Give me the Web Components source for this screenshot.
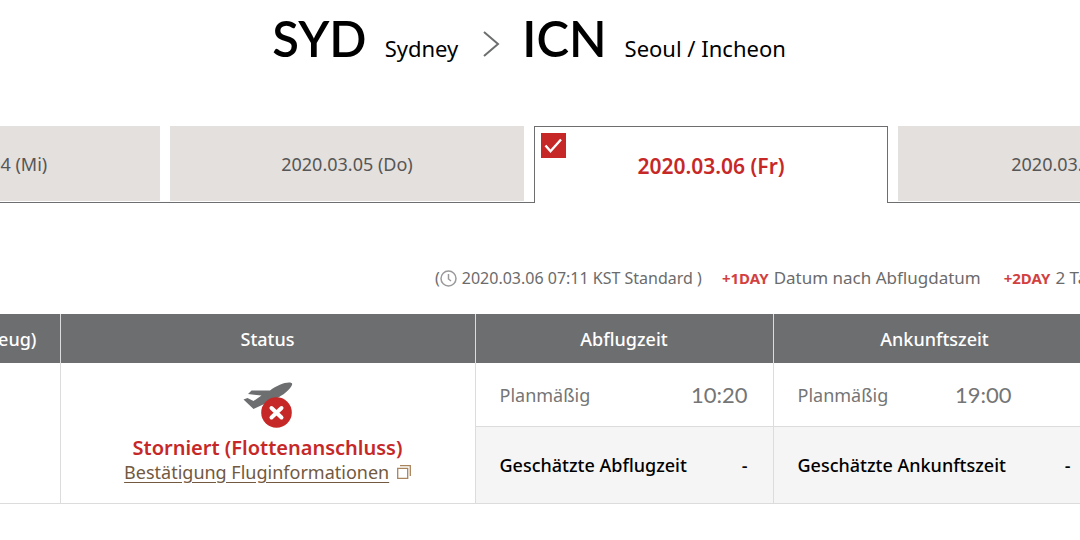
<!DOCTYPE html>
<html lang="de">
<head>
<meta charset="utf-8">
<title>Flugstatus</title>
<style>
  body {
    margin: 0;
    background: #fff;
    color: #000;
    font-family: "Noto Sans", sans-serif;
    overflow: hidden;
  }
</style>
</head>
<body>
<flight-page>
  <flight-route from="SYD" to="ICN">
    <span slot="from-city">Sydney</span>
    <span slot="to-city">Seoul / Incheon</span>
  </flight-route>
  <date-tabs>
    <date-tab>2020.03.04 (Mi)</date-tab>
    <date-tab>2020.03.05 (Do)</date-tab>
    <date-tab selected>2020.03.06 (Fr)</date-tab>
    <date-tab>2020.03.07 (Sa)</date-tab>
  </date-tabs>
  <time-legend time="2020.03.06 07:11 KST Standard"></time-legend>
  <flight-table></flight-table>
</flight-page>

<script>
class FlightPage extends HTMLElement {
  constructor() {
    super();
    this.attachShadow({ mode: 'open' }).innerHTML = `
      <style>
        :host {
          display: block;
          overflow: hidden;
        }
        /* Content is wider than the viewport on both sides */
        .wrap {
          width: calc(100% + 366px);
          margin-left: -194px;
          padding-bottom: 36px;
        }
      </style>
      <div class="wrap"><slot></slot></div>
    `;
  }
}

class FlightRoute extends HTMLElement {
  constructor() {
    super();
    this.attachShadow({ mode: 'open' });
  }

  connectedCallback() {
    this.shadowRoot.innerHTML = `
      <style>
        :host { display: block; }
        h1 {
          display: flex;
          justify-content: center;
          align-items: baseline;
          margin: 0;
          padding-top: 8px;
          font-size: 22px;
          font-weight: 400;
          line-height: 60px;
        }
        .code {
          margin-right: 18px;
          font-family: Lato, sans-serif;
          font-size: 49px;
          font-weight: 600;
        }
        svg { margin: 0 22px 0 24px; }
      </style>
      <h1>
        <span class="code">${this.getAttribute('from')}</span>
        <slot name="from-city"></slot>
        <svg width="18" height="26" viewBox="0 0 18 26" fill="none" stroke="#6d6e70" stroke-width="2" aria-hidden="true">
          <path d="M2 1l14 12L2 25"/>
        </svg>
        <span class="code">${this.getAttribute('to')}</span>
        <slot name="to-city"></slot>
      </h1>
    `;
  }
}

class DateTabs extends HTMLElement {
  constructor() {
    super();
    this.attachShadow({ mode: 'open' }).innerHTML = `
      <style>
        :host { display: block; margin-top: 48px; }
        .tabs {
          display: flex;
          height: 77px;
        }
        ::slotted(*) { flex: 1; }
      </style>
      <div class="tabs"><slot></slot></div>
    `;
  }

  connectedCallback() {
    this.addEventListener('click', (e) => {
      const tab = e.target.closest('date-tab');
      if (!tab) return;
      this.querySelectorAll('date-tab').forEach((t) => t.toggleAttribute('selected', t === tab));
    });
  }
}

class DateTab extends HTMLElement {
  constructor() {
    super();
    this.attachShadow({ mode: 'open' }).innerHTML = `
      <style>
        /* Bottom line runs below each gap, the open tab interrupts it */
        :host {
          display: flex;
          box-sizing: border-box;
          padding: 0 5px 1px;
          border-bottom: 1px solid #6d6e70;
        }
        :host(:first-child) { padding-left: 0; }
        :host(:last-child) { padding-right: 0; }
        :host([selected]) { padding-bottom: 0; border-bottom: 0; }
        :host([selected])::before,
        :host([selected])::after {
          content: '';
          width: 5px;
          margin-left: -5px;
          border-bottom: 1px solid #6d6e70;
        }
        :host([selected])::after { margin: 0 -5px 0 0; }
        button {
          position: relative;
          flex: 1;
          padding: 0;
          border: 0;
          background: #e4e0dd;
          color: #565656;
          font: 400 18px/24px "Noto Sans", sans-serif;
          cursor: pointer;
        }
        :host([selected]) button {
          padding-top: 2px;
          border: 1px solid #6d6e70;
          border-bottom: 0;
          background: #fff;
          color: #c62828;
          font-size: 21px;
          font-weight: 600;
        }
        /* Tick in the corner of the open tab */
        svg {
          display: none;
          position: absolute;
          top: 6px;
          left: 6px;
        }
        :host([selected]) svg { display: block; }
      </style>
      <button type="button">
        <svg width="25" height="25" viewBox="0 0 25 25" aria-hidden="true">
          <path fill="#c62828" d="M0 0h25v25H0z"/>
          <path fill="none" stroke="#fff" stroke-width="2.400" d="M4.500 12.500l5 5.800L20 6.500"/>
        </svg>
        <slot></slot>
      </button>
    `;
  }
}

class TimeLegend extends HTMLElement {
  constructor() {
    super();
    this.attachShadow({ mode: 'open' });
  }

  connectedCallback() {
    this.shadowRoot.innerHTML = `
      <style>
        :host {
          display: flex;
          align-items: center;
          padding: 63px 0 24px 629px;
          color: #6b6b6b;
          font-size: 17px;
          line-height: 24px;
          white-space: nowrap;
        }
        .now {
          display: flex;
          align-items: center;
          margin-right: 20px;
          font-size: 16px;
        }
        svg { margin-right: 5px; }
        .item { margin-right: 23px; }
        b {
          margin-right: 5px;
          color: #d2413f;
          font-size: 15px;
        }
      </style>
      <span class="now">(<svg width="17" height="17" viewBox="0 0 17 17" fill="none" stroke="#9a9a9a" stroke-width="1.500" aria-hidden="true">
        <circle cx="8.500" cy="8.500" r="7.500"/>
        <path d="M8.500 4v5l2.500 2"/>
      </svg>${this.getAttribute('time')} )</span>
      <span class="item"><b>+1DAY</b>Datum nach Abflugdatum</span>
      <span class="item"><b>+2DAY</b>2 Tage nach Abflugdatum</span>
    `;
  }
}

class FlightTable extends HTMLElement {
  constructor() {
    super();
    this.attachShadow({ mode: 'open' }).innerHTML = `
      <style>
        :host { display: block; font-size: 18px; line-height: 24px; }
        table {
          width: 100%;
          table-layout: fixed;
          border-collapse: collapse;
        }
        .flight { width: 254px; }
        .status { width: 415px; }
        .dep { width: 298px; }
        .arr { width: 323px; }
        th {
          height: 49px;
          padding: 0;
          border-right: 1px solid #dcdcdc;
          background: #6d6e70;
          color: #fff;
          font-weight: 500;
        }
        th:first-child {
          padding-right: 23px;
          text-align: right;
          white-space: nowrap;
        }
        td {
          height: 63px;
          padding: 0;
          border-right: 1px solid #dcdcdc;
          border-bottom: 1px solid #dcdcdc;
        }
        tr.plan { color: #757575; }
        tr.est td {
          height: 76px;
          background: #f5f5f5;
          font-weight: 500;
        }
        .row {
          display: flex;
          justify-content: space-between;
          align-items: center;
          padding: 0 25px 0 24px;
        }
        .time {
          font-family: Lato, sans-serif;
          font-size: 22px;
        }
        .next-day { padding-right: 59px; }
      </style>
      <table>
        <colgroup>
          <col class="flight"><col class="status"><col class="dep"><col class="arr"><col>
        </colgroup>
        <thead>
          <tr><th>Flug (Flugzeug)</th><th>Status</th><th>Abflugzeit</th><th>Ankunftszeit</th><th></th></tr>
        </thead>
        <tbody>
          <tr class="plan">
            <td rowspan="2"></td>
            <td rowspan="2"><flight-status>Storniert (Flottenanschluss)</flight-status></td>
            <td><div class="row"><span>Planmäßig</span><span class="time">10:20</span></div></td>
            <td><div class="row"><span>Planmäßig</span><span class="time next-day">19:00</span></div></td>
            <td rowspan="2"></td>
          </tr>
          <tr class="est">
            <td><div class="row"><span>Geschätzte Abflugzeit</span><span>-</span></div></td>
            <td><div class="row"><span>Geschätzte Ankunftszeit</span><span>-</span></div></td>
          </tr>
        </tbody>
      </table>
    `;
  }
}

class FlightStatus extends HTMLElement {
  constructor() {
    super();
    this.attachShadow({ mode: 'open' }).innerHTML = `
      <style>
        :host {
          display: flex;
          flex-direction: column;
          align-items: center;
        }
        .plane { margin-bottom: 8px; }
        strong {
          color: #c62828;
          font-size: 20px;
          font-weight: 600;
        }
        a {
          color: #72593f;
          text-decoration: none;
        }
        a span {
          text-decoration: underline;
          text-underline-offset: 3px;
        }
        a svg { margin-left: 3px; }
      </style>
      <svg class="plane" width="50" height="46" viewBox="0 0 50 46" aria-hidden="true">
        <path fill="#6d6e70" d="M.5 17.500L4.500 16l6 3 8-5.500L5 12l3.500-3.500L27 8.500C33 4 41 .5 46 .5c3 0 4 1 2.500 3.500C45 10 37 15 30 18L10.500 27z"/>
        <circle cx="33.500" cy="30.500" r="15.300" fill="#c62828"/>
        <path stroke="#fff" stroke-width="4" stroke-linecap="round" d="M28.500 26l10 9.500M38.500 26l-10 9.500"/>
      </svg>
      <strong><slot></slot></strong>
      <a href="#"><span>Bestätigung Fluginformationen</span>
        <svg width="14" height="14" viewBox="0 0 14 14" fill="none" stroke="#a9845c" stroke-width="1.300" aria-hidden="true">
          <path d="M.7 3.300h10v10H.7z"/>
          <path d="M3 .7h10.300V11"/>
        </svg>
      </a>
    `;
  }
}

customElements.define('flight-page', FlightPage);
customElements.define('flight-route', FlightRoute);
customElements.define('date-tabs', DateTabs);
customElements.define('date-tab', DateTab);
customElements.define('time-legend', TimeLegend);
customElements.define('flight-table', FlightTable);
customElements.define('flight-status', FlightStatus);
</script>
</body>
</html>
